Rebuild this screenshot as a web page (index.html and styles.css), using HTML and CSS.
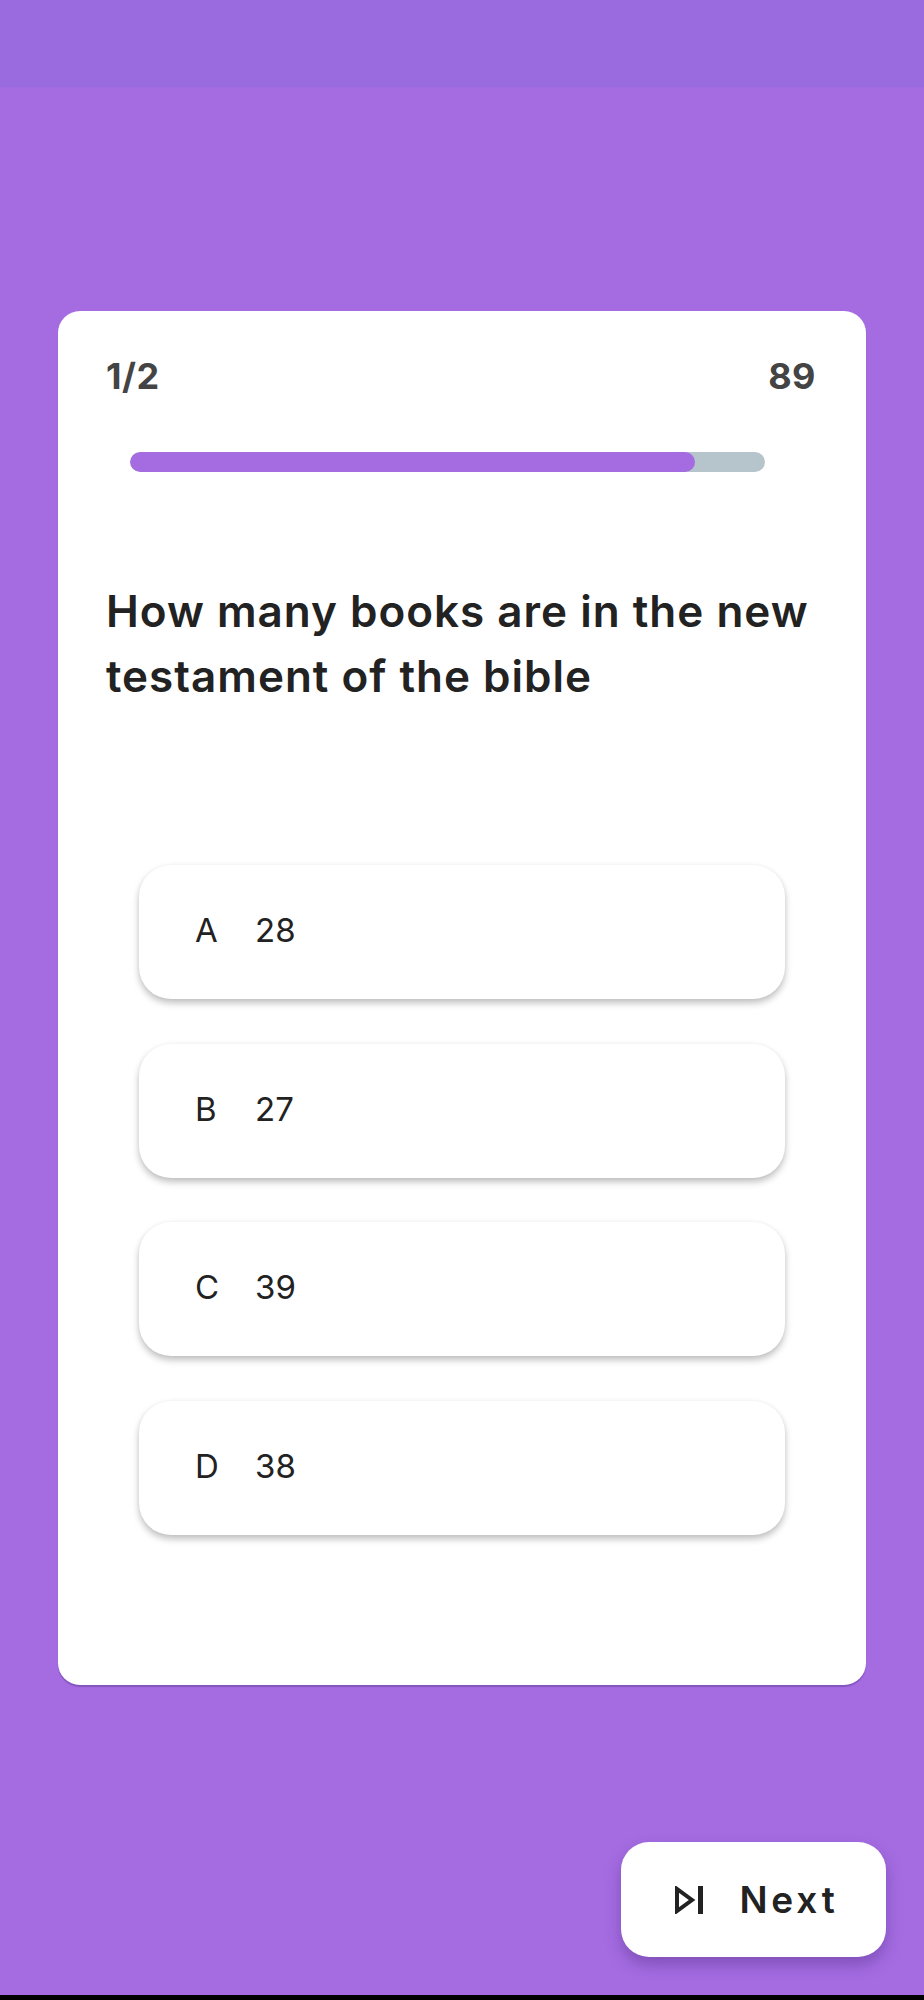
FILE: index.html
```html
<!DOCTYPE html>
<html lang="en">
<head>
    <meta charset="UTF-8">
    <meta name="viewport" content="width=device-width, initial-scale=1.0">
    <title>Quiz</title>
    <link rel="stylesheet" href="styles.css">
</head>
<body>
    <div class="statusBar"></div>
    <main class="quizPage">
        <section class="quizCard">
            <div class="cardHeader">
                <span>1/2</span>
                <span>89</span>
            </div>
            <div class="progressTrack">
                <div class="progressFill" style="width: 89%"></div>
            </div>
            <h1 class="question">How many books are in the new testament of the bible</h1>
            <ul class="optionList">
                <li class="option"><span class="optionLetter">A</span><span>28</span></li>
                <li class="option"><span class="optionLetter">B</span><span>27</span></li>
                <li class="option"><span class="optionLetter">C</span><span>39</span></li>
                <li class="option"><span class="optionLetter">D</span><span>38</span></li>
            </ul>
        </section>
        <button class="nextButton" type="button">
            <svg class="nextIcon" viewBox="0 0 29 28" aria-hidden="true">
                <polygon class="nextIconArrow" points="2,3 2,25 17,14"></polygon>
                <rect class="nextIconBar" x="23" y="0" width="5" height="28"></rect>
            </svg>
            Next
        </button>
    </main>
    <div class="bottomBar"></div>
</body>
</html>
```

FILE: styles.css
```css
* {
    box-sizing: border-box;
}
body {
    font-family: 'Inter', 'Liberation Sans', sans-serif;
    background-color: #a56ce2;
    margin: 0;
    padding: 0;
    height: 2000px;
    display: flex;
    flex-direction: column;
}
.statusBar {
    height: 87px;
    background-color: #9a6bde;
}
.quizPage {
    flex: 1;
    display: flex;
    flex-direction: column;
    padding: 224px 38px 0 58px;
}
.quizCard {
    width: 808px;
    height: 1374px;
    background-color: #fff;
    border-radius: 22px;
    box-shadow: 0 2px 1px rgba(60, 30, 110, 0.3);
    padding: 40px 50px 0 48px;
}
.cardHeader {
    display: flex;
    justify-content: space-between;
    align-items: center;
    height: 50px;
    font-size: 36px;
    font-weight: 700;
    letter-spacing: 0.5px;
    color: #444;
}
.progressTrack {
    width: 635px;
    height: 20px;
    margin: 51px 0 0 24px;
    background-color: #b5c5cb;
    border-radius: 10px;
    overflow: hidden;
}
.progressFill {
    height: 100%;
    background-color: #a56ce2;
    border-radius: 10px;
}
.question {
    margin: 107px 0 0;
    font-size: 44px;
    font-weight: 600;
    letter-spacing: 1px;
    line-height: 65px;
    color: #222;
}
.optionList {
    list-style: none;
    margin: 156px 0 0 33px;
    padding: 0;
    width: 646px;
    display: flex;
    flex-direction: column;
    gap: 44.5px;
}
.option {
    height: 134px;
    display: flex;
    align-items: center;
    padding: 0 0 4px 56px;
    background-color: #fff;
    border-radius: 32px;
    box-shadow: 0 4px 7px rgba(0, 0, 0, 0.25), 0 0 4px rgba(0, 0, 0, 0.03);
    font-size: 33px;
    color: #222;
}
.optionLetter {
    width: 60px;
}
.nextButton {
    align-self: flex-end;
    margin-top: 157px;
    width: 265px;
    height: 115px;
    display: flex;
    align-items: center;
    justify-content: center;
    gap: 35px;
    padding: 0 0 0 7px;
    border: none;
    border-radius: 28px;
    background-color: #fff;
    box-shadow: 0 8px 16px rgba(60, 30, 110, 0.35);
    font-family: inherit;
    font-size: 37px;
    font-weight: 600;
    letter-spacing: 3.8px;
    color: #222;
}
.nextIcon {
    width: 29px;
    height: 28px;
}
.nextIconArrow {
    fill: none;
    stroke: #222;
    stroke-width: 4;
}
.nextIconBar {
    fill: #222;
}
.bottomBar {
    height: 5px;
    background-color: #000;
}
```
